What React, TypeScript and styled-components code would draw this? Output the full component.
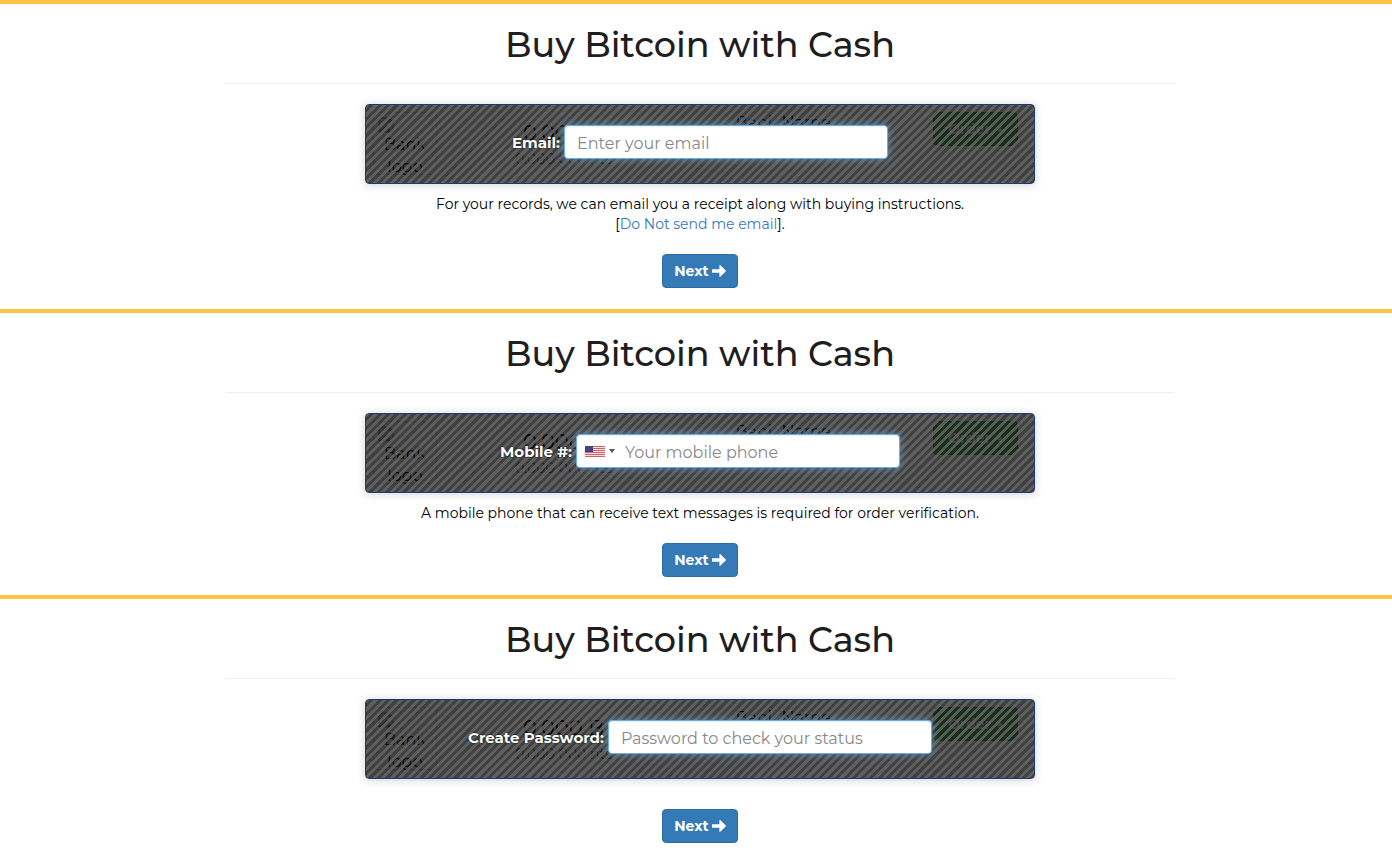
import React from "react";
import styled, { createGlobalStyle } from "styled-components";

const GlobalStyle = createGlobalStyle`
  *, *::before, *::after { box-sizing: border-box; }
  body {
    margin: 0;
    background: #fff;
    color: #222;
    font-family: Montserrat, Inter, "Open Sans", sans-serif;
    font-size: 14px;
    line-height: 20px;
  }
  button, input { font: inherit; }
`;

const Step = styled.section<{ $tight?: boolean }>`
  border-top: 4px solid #ffc346;
  padding: 20px 0 ${(p) => (p.$tight ? 18 : 21)}px 8px;
  text-align: center;
`;

const Title = styled.h1`
  max-width: 950px;
  margin: 0 auto 20px;
  padding-bottom: 17px;
  border-bottom: 1px solid #eee;
  color: #1e1e1e;
  font-size: 35px;
  line-height: 42px;
  font-weight: 500;
`;

const Panel = styled.div`
  position: relative;
  max-width: 670px;
  height: 80px;
  margin: 0 auto 10px;
  border-radius: 4px;
  box-shadow: 0 1px 10px rgba(0, 0, 0, 0.18);
`;

const Offer = styled.div`
  display: grid;
  grid-template-columns: 64px 253fr 186fr 142fr;
  height: 80px;
  padding: 8px 17px 0 8px;
  border-radius: 4px;
  background: #fff;
  color: #000;
  font-size: 16px;
  line-height: 22px;
`;

const Logo = styled.div`
  height: 63px;
  border: 1px solid #e0e0e0;
  svg { display: block; margin: 4px; }
  span { display: block; margin-top: -3px; }
`;

const Amount = styled.div`
  padding-top: 10px;
  font-size: 21px;
  small {
    display: block;
    margin-top: 5px;
    color: #777;
    font-size: 14px;
    line-height: 20px;
  }
`;

const OrderCell = styled.div`
  text-align: right;
`;

const OrderButton = styled.button`
  width: 85px;
  height: 34px;
  padding: 0;
  border: 1px solid #4cae4c;
  border-radius: 4px;
  background: #5cb85c;
  color: #fff;
  font-size: 14px;
  font-weight: 700;
`;

const Cover = styled.div`
  position: absolute;
  inset: 0;
  display: flex;
  justify-content: center;
  align-items: flex-start;
  gap: 4px;
  padding-top: 20px;
  border: 1px solid #1c3a78;
  border-radius: 4px;
  background: repeating-linear-gradient(
    -45deg,
    rgba(0, 0, 0, 0.75) 0,
    rgba(0, 0, 0, 0.75) 3px,
    rgba(88, 88, 88, 0.96) 3px,
    rgba(88, 88, 88, 0.96) 6px
  );
`;

const Label = styled.label`
  color: #fff;
  font-size: 15px;
  font-weight: 700;
  line-height: 36px;
  text-shadow: 0 0 2px #000;
`;

const Field = styled.div`
  display: flex;
  width: 324px;
  height: 34px;
  border: 1px solid #66afe9;
  border-radius: 4px;
  background: #fff;
  box-shadow: inset 0 1px 1px rgba(0, 0, 0, 0.075), 0 0 8px rgba(102, 175, 233, 0.6);
`;

const Input = styled.input<{ $afterFlag?: boolean }>`
  flex: 1;
  min-width: 0;
  padding: 3px 12px 0 ${(p) => (p.$afterFlag ? 8 : 12)}px;
  border: 0;
  outline: 0;
  background: transparent;
  color: #555;
  font-size: 16px;
  &::placeholder { color: #888; opacity: 1; }
`;

const Country = styled.button`
  display: flex;
  align-items: center;
  gap: 4px;
  width: 40px;
  padding: 0 0 0 8px;
  border: 0;
  background: transparent;
`;

const Help = styled.p`
  margin: 0;
  color: #000;
  font-size: 14px;
  line-height: 20px;
  font-weight: 400;
  a { color: #337ab7; text-decoration: none; }
`;

const NextButton = styled.button`
  display: inline-flex;
  align-items: center;
  justify-content: center;
  gap: 3px;
  width: 76px;
  height: 34px;
  margin-top: 20px;
  padding: 0;
  border: 1px solid #2e6da4;
  border-radius: 4px;
  background: #337ab7;
  color: #fff;
  font-size: 14px;
  line-height: 20px;
  font-weight: 700;
`;

const Actions = styled.div`
  display: flex;
  justify-content: center;
`;

const BrokenImage = () => (
  <svg width="16" height="16" viewBox="0 0 16 16">
    <path d="M1 1h10l4 4v10H1z" fill="#c6d9f7" stroke="#8a8a8a" />
    <path d="M1 15l8-7 3 3v4z" fill="#4caf28" />
    <path d="M3 6q2-3 4 0z" fill="#fff" />
    <path d="M2 16L16 3v4L7 16z" fill="#fff" />
    <path d="M11 1v4h4" fill="none" stroke="#8a8a8a" />
  </svg>
);

const Arrow = () => (
  <svg width="14" height="14" viewBox="0 0 14 14" aria-hidden="true">
    <path d="M0 5.3h7.4V1.4c0-.5.4-.7.8-.3l5.5 5.4c.3.3.3.6 0 .9l-5.5 5.4c-.4.4-.8.2-.8-.3V8.7H0z" fill="#fff" />
  </svg>
);

const Flag = () => (
  <svg width="20" height="11" viewBox="0 0 20 11" aria-hidden="true">
    <rect width="20" height="11" fill="#f1dfe2" />
    {[0, 2, 4, 6, 8, 10].map((y) => (
      <rect key={y} y={y} width="20" height="1" fill="#d4606e" />
    ))}
    <rect width="8" height="6" fill="#46467f" />
  </svg>
);

const Caret = () => (
  <svg width="6" height="4" viewBox="0 0 6 4" aria-hidden="true">
    <path d="M0 0h6L3 4z" fill="#555" />
  </svg>
);

type StepProps = {
  id: string;
  label: string;
  placeholder: string;
  type: string;
  flag?: boolean;
  tight?: boolean;
  children?: React.ReactNode;
};

function BuyStep({ id, label, placeholder, type, flag, tight, children }: StepProps) {
  return (
    <Step $tight={tight}>
      <Title>Buy Bitcoin with Cash</Title>
      <Panel>
        <Offer aria-hidden="true">
          <Logo>
            <BrokenImage />
            <span>Bank logo</span>
          </Logo>
          <Amount>
            0.000 B
            <small>0.000 000 nts</small>
          </Amount>
          <div>Bank Name</div>
          <OrderCell>
            <OrderButton type="button" tabIndex={-1}>Order →</OrderButton>
          </OrderCell>
        </Offer>
        <Cover>
          <Label htmlFor={id}>{label}</Label>
          <Field>
            {flag && (
              <Country type="button" aria-label="Country: United States">
                <Flag />
                <Caret />
              </Country>
            )}
            <Input id={id} type={type} placeholder={placeholder} $afterFlag={flag} />
          </Field>
        </Cover>
      </Panel>
      {children}
      <Actions>
        <NextButton type="button">
          Next
          <Arrow />
        </NextButton>
      </Actions>
    </Step>
  );
}

export default function App() {
  return (
    <>
      <GlobalStyle />
      <main>
        <BuyStep id="email" label="Email:" type="email" placeholder="Enter your email">
          <Help>
            For your records, we can email you a receipt along with buying instructions.
            <br />[<a href="#skip">Do Not send me email</a>].
          </Help>
        </BuyStep>
        <BuyStep id="mobile" label="Mobile #:" type="tel" placeholder="Your mobile phone" flag tight>
          <Help>A mobile phone that can receive text messages is required for order verification.</Help>
        </BuyStep>
        <BuyStep id="password" label="Create Password:" type="password" placeholder="Password to check your status" />
      </main>
    </>
  );
}
